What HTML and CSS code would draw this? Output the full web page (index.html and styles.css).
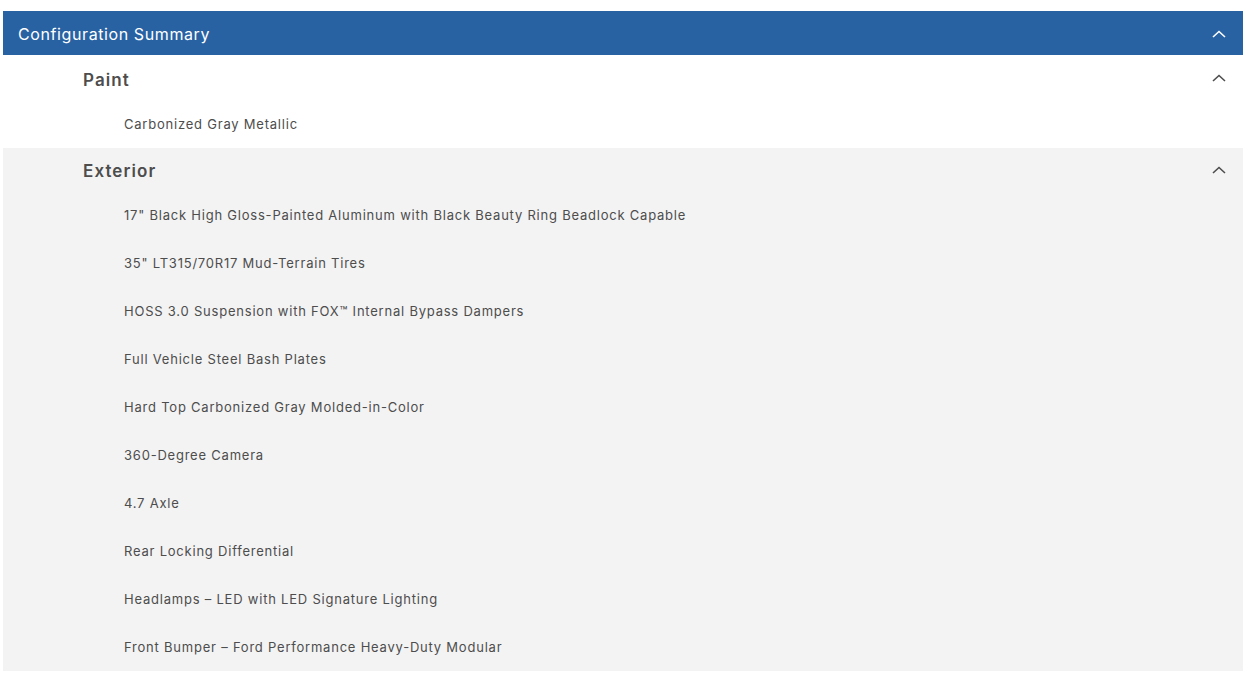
FILE: index.html
```html
<!DOCTYPE html>
<html lang="en">
<head>
    <meta charset="UTF-8">
    <meta name="viewport" content="width=device-width, initial-scale=1.0">
    <title>Configuration Summary</title>
    <link rel="stylesheet" href="styles.css">
</head>
<body>
    <div class="summary">
        <div class="summary-header">
            <span>Configuration Summary</span>
            <svg class="chevron" width="14" height="8" viewBox="0 0 14 8"><polyline points="1,7 7,1.5 13,7" fill="none" stroke="currentColor" stroke-width="1.6"/></svg>
        </div>

        <div class="section first">
            <div class="section-head">
                <h3>Paint</h3>
                <svg class="chevron" width="14" height="8" viewBox="0 0 14 8"><polyline points="1,7 7,1.5 13,7" fill="none" stroke="currentColor" stroke-width="1.6"/></svg>
            </div>
            <ul class="items">
                <li>Carbonized Gray Metallic</li>
            </ul>
        </div>

        <div class="section alt">
            <div class="section-head">
                <h3>Exterior</h3>
                <svg class="chevron" width="14" height="8" viewBox="0 0 14 8"><polyline points="1,7 7,1.5 13,7" fill="none" stroke="currentColor" stroke-width="1.6"/></svg>
            </div>
            <ul class="items">
                <li>17" Black High Gloss-Painted Aluminum with Black Beauty Ring Beadlock Capable</li>
                <li>35" LT315/70R17 Mud-Terrain Tires</li>
                <li>HOSS 3.0 Suspension with FOX™ Internal Bypass Dampers</li>
                <li>Full Vehicle Steel Bash Plates</li>
                <li>Hard Top Carbonized Gray Molded-in-Color</li>
                <li>360-Degree Camera</li>
                <li>4.7 Axle</li>
                <li>Rear Locking Differential</li>
                <li>Headlamps – LED with LED Signature Lighting</li>
                <li>Front Bumper – Ford Performance Heavy-Duty Modular</li>
            </ul>
        </div>
    </div>
</body>
</html>
```

FILE: styles.css
```css
body {
    margin: 0;
    padding: 11px 10px 0 3px;
    font-family: Inter, 'Liberation Sans', sans-serif;
    background-color: white;
    color: #4d4d4d;
}

.summary {
    width: 1240px;
}

.summary-header {
    display: flex;
    align-items: center;
    justify-content: space-between;
    height: 44px;
    padding: 2px 17px 0 15px;
    box-sizing: border-box;
    background-color: #2862a3;
    color: white;
    font-size: 16px;
    letter-spacing: 0.6px;
}

.chevron {
    display: block;
}

.section {
    background-color: white;
}

.section.first {
    padding-top: 1px;
}

.section.alt {
    background-color: #f3f3f3;
}

.section-head {
    display: flex;
    align-items: center;
    justify-content: space-between;
    height: 44px;
    padding: 0 17px 0 80px;
}

.section.alt .section-head {
    height: 43px;
}

.section-head h3 {
    margin: 3px 0 0;
    font-size: 17px;
    font-weight: 600;
    letter-spacing: 1.1px;
    color: #4d4d4d;
}

.items {
    list-style: none;
    margin: 0;
    padding: 0 0 0 121px;
}

.items li {
    height: 48px;
    line-height: 49px;
    font-size: 13px;
    letter-spacing: 0.78px;
    color: #4d4d4d;
}
```
